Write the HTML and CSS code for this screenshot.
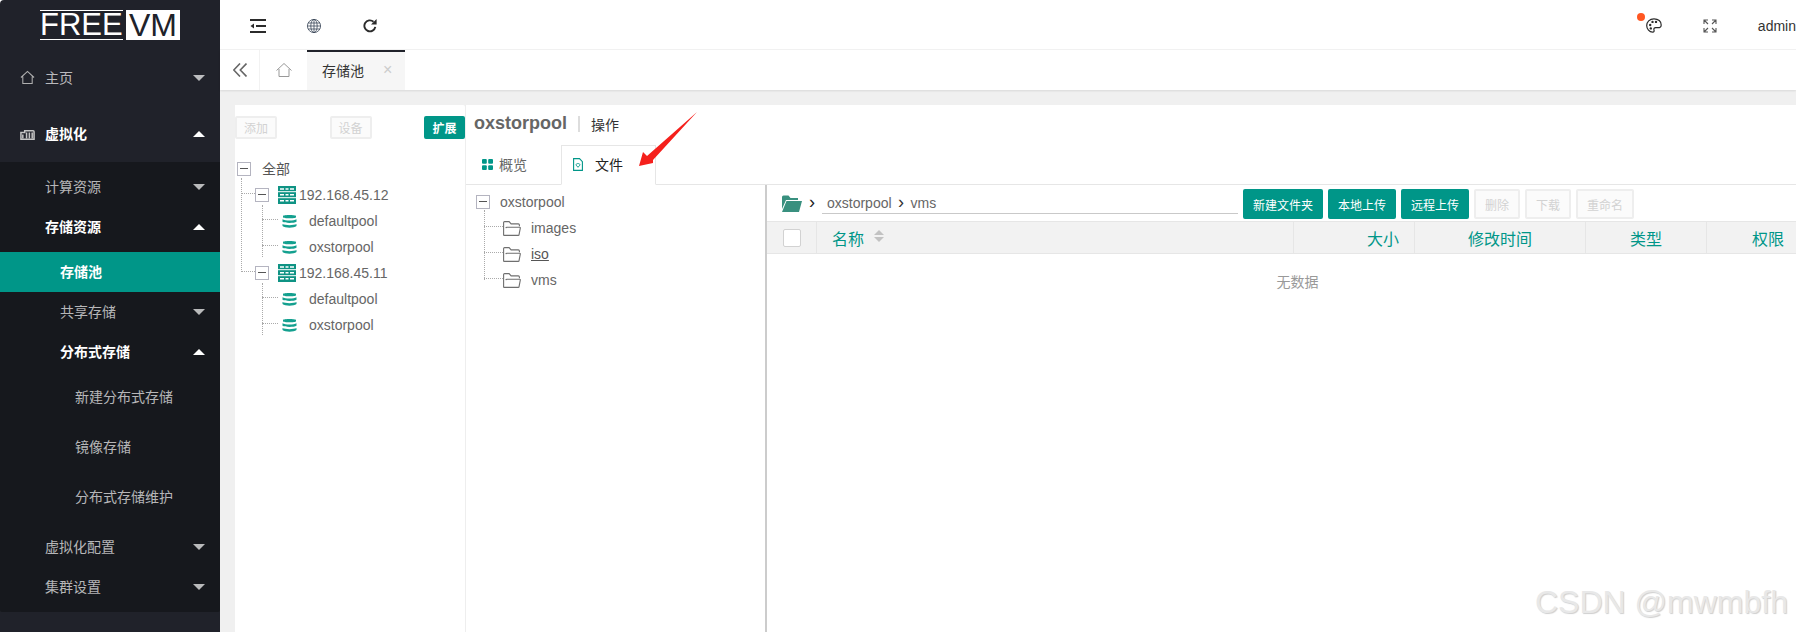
FILE: index.html
```html
<!doctype html>
<html lang="en">
  <head>
    <meta charset="utf-8">
    <title>存储池</title>
    <link rel="stylesheet" href="styles.css">
  </head>
  <body>
    <aside class="side">
      <div class="logo"><span class="logo-free">FREE</span><span class="logo-vm">VM</span></div>

      <a class="nav-top">
        <svg class="nav-icon" viewBox="0 0 16 16"><path d="M1 8 8 1.500 15 8M3 7v7.500h10V7" fill="none" stroke="#b0b0b0" stroke-width="1.100"/></svg>
        主页<i class="caret"></i>
      </a>
      <a class="nav-top open">
        <svg class="nav-icon" viewBox="0 0 16 16"><path d="M1 7h4V5h9a1 1 0 0 1 1 1v8H1zM7 7v6M10 7v6M13 7v6M3 9v4" fill="none" stroke="#c4c4c4" stroke-width="1.600"/></svg>
        虚拟化<i class="caret up"></i>
      </a>

      <div class="nav-sub">
        <a class="lv2">计算资源<i class="caret"></i></a>
        <a class="lv2 open">存储资源<i class="caret up"></i></a>
        <div class="nav-group">
          <a class="lv3 current">存储池</a>
          <a class="lv3">共享存储<i class="caret"></i></a>
          <a class="lv3 open">分布式存储<i class="caret up"></i></a>
          <a class="lv4">新建分布式存储</a>
          <a class="lv4">镜像存储</a>
          <a class="lv4">分布式存储维护</a>
        </div>
        <a class="lv2">虚拟化配置<i class="caret"></i></a>
        <a class="lv2">集群设置<i class="caret"></i></a>
      </div>
    </aside>

    <main class="main">
      <header class="topbar">
        <svg class="tool tool-first" viewBox="0 0 16 14"><path d="M0 1h16M6 7h10M0 13h16" stroke="#2b2b2b" stroke-width="1.800" fill="none"/><path d="M4 4.500 0.500 7 4 9.500z" fill="#2b2b2b"/></svg>
        <svg class="tool" viewBox="0 0 16 14"><g fill="none" stroke="#3a4658" stroke-width=".8"><circle cx="8" cy="7" r="6.600"/><ellipse cx="8" cy="7" rx="3.200" ry="6.600"/><path d="M8 .4v13.200M2 4h12M2 10h12M1.400 7h13.200"/></g></svg>
        <svg class="tool" viewBox="0 0 16 14"><path d="M13.300 7.800A5.500 5.500 0 1 1 11.500 2.700" fill="none" stroke="#2b2b2b" stroke-width="1.900"/><path d="M9 5.600H14.600V0z" fill="#2b2b2b"/></svg>
        <div class="top-right">
          <i class="dot"></i>
          <svg class="palette" viewBox="0 0 16 15"><path d="M8 .8C3.500.8.700 4 .700 7.500c0 3.500 2.800 6.700 5.800 6.700 2 0 1.700-1.700 1.400-2.600-.3-1.100.5-1.900 1.700-1.900h2.300c1.900 0 3.300-1 3.300-2.800C15.300 3.500 12.300.8 8 .8z" fill="none" stroke="#2b2b2b" stroke-width="1.200"/><circle cx="4.200" cy="7" r="1.200" fill="#2b2b2b"/><circle cx="6.500" cy="3.900" r="1.200" fill="#2b2b2b"/><circle cx="10" cy="3.900" r="1.200" fill="#2b2b2b"/><circle cx="4.800" cy="10.400" r="1.200" fill="#2b2b2b"/></svg>
          <svg class="expand" viewBox="0 0 14 14"><path d="M1 5V1h4M1 1l4 4M9 1h4v4M13 1 9 5M1 9v4h4M1 13l4-4M13 9v4H9M13 13 9 9" fill="none" stroke="#555" stroke-width="1.100"/></svg>
          <span class="admin">admin</span>
        </div>
      </header>

      <nav class="tabbar">
        <span class="tab-fold">
          <svg viewBox="0 0 14 14"><path d="M7 .5.800 7 7 13.500M13.500.5 7.300 7l6.200 6.500" fill="none" stroke="#666" stroke-width="1.600"/></svg>
        </span>
        <span class="tab-home">
          <svg viewBox="0 0 16 14"><path d="M.500 7.500 8 .500l7.500 7M3 6v7.500h10V6" fill="none" stroke="#999" stroke-width="1"/></svg>
        </span>
        <span class="tab-on">存储池<b class="tab-x">×</b></span>
      </nav>

      <div class="content">
        <section class="left-card">
          <div class="btn-row">
            <button class="btn off">添加</button>
            <button class="btn off">设备</button>
            <button class="btn teal">扩展</button>
          </div>
          <div class="tree">
            <div class="row root"><i class="box"></i><span class="root-label">全部</span></div>
            <ul class="nodes">
              <li>
                <div class="row host"><i class="box"></i>
                  <svg class="srv" viewBox="0 0 18 18"><use href="#srv"/></svg>192.168.45.12</div>
                <ul class="pools">
                  <li class="row pool"><svg class="db" viewBox="0 0 15 14"><use href="#db"/></svg>defaultpool</li>
                  <li class="row pool"><svg class="db" viewBox="0 0 15 14"><use href="#db"/></svg>oxstorpool</li>
                </ul>
              </li>
              <li>
                <div class="row host"><i class="box"></i>
                  <svg class="srv" viewBox="0 0 18 18"><use href="#srv"/></svg>192.168.45.11</div>
                <ul class="pools">
                  <li class="row pool"><svg class="db" viewBox="0 0 15 14"><use href="#db"/></svg>defaultpool</li>
                  <li class="row pool"><svg class="db" viewBox="0 0 15 14"><use href="#db"/></svg>oxstorpool</li>
                </ul>
              </li>
            </ul>
          </div>
        </section>

        <section class="right-card">
          <div class="title-row">
            <strong class="pool-name">oxstorpool</strong><i class="sep"></i><span class="ops">操作</span>
          </div>
          <div class="tabs">
            <span class="tab">
              <svg class="tab-ic" viewBox="0 0 11 11"><rect width="4.800" height="4.800" rx="1" fill="#009688"/><rect x="6.200" width="4.800" height="4.800" rx="1" fill="#009688"/><rect y="6.200" width="4.800" height="4.800" rx="1" fill="#009688"/><rect x="6.200" y="6.200" width="4.800" height="4.800" rx="1" fill="#009688"/></svg>概览
            </span>
            <span class="tab active">
              <svg class="tab-file" viewBox="0 0 10 13"><path d="M.600.600h5.900l2.900 3v8.800H.600z" fill="none" stroke="#009688" stroke-width="1.100"/><path d="M5 9.300 3.200 7.200a1.200 1.200 0 0 1 1.800-1.400 1.200 1.200 0 0 1 1.800 1.400z" fill="none" stroke="#009688" stroke-width=".9"/></svg>文件
            </span>
          </div>

          <div class="file-area">
            <div class="file-tree">
              <div class="row root"><i class="box"></i><span class="file-root">oxstorpool</span></div>
              <ul class="folders">
                <li class="row folder"><svg class="fold" viewBox="0 0 18 15"><use href="#fold"/></svg>images</li>
                <li class="row folder"><svg class="fold" viewBox="0 0 18 15"><use href="#fold"/></svg><u>iso</u></li>
                <li class="row folder"><svg class="fold" viewBox="0 0 18 15"><use href="#fold"/></svg>vms</li>
              </ul>
            </div>

            <div class="file-list">
              <div class="toolbar">
                <svg class="path-ic" viewBox="0 0 20 17"><path d="M0 2a1.500 1.500 0 0 1 1.500-1.500h5L8.500 3H16v2H4L0 14z" fill="#39907f"/><path d="M4.500 6H20l-3 11H0z" fill="#39907f"/></svg>
                <span class="chev">›</span>
                <div class="path-input">oxstorpool<span class="chev small">›</span>vms</div>
                <button class="btn teal big first-big">新建文件夹</button>
                <button class="btn teal big">本地上传</button>
                <button class="btn teal big">远程上传</button>
                <button class="btn off big">删除</button>
                <button class="btn off big">下载</button>
                <button class="btn off big">重命名</button>
              </div>
              <div class="thead">
                <span class="col col-check"><i class="check"></i></span>
                <span class="col col-name">名称<i class="sort"></i></span>
                <span class="col col-size">大小</span>
                <span class="col col-time">修改时间</span>
                <span class="col col-type">类型</span>
                <span class="col col-perm">权限</span>
              </div>
              <div class="empty">无数据</div>
            </div>
          </div>
        </section>
      </div>
    </main>

    <svg class="red-arrow" viewBox="0 0 1796 632"><path d="M697 112 653 160 653 163 639 166 643 152 647 156z" fill="#f5201c"/></svg>
    <div class="mark">CSDN @mwmbfh</div>

    <svg class="defs" width="0" height="0">
      <symbol id="srv" viewBox="0 0 18 18">
        <path d="M0 0h18v18H0z" fill="#0f9384"/>
        <path d="M0 5.700h18M0 11.700h18" stroke="#fff" stroke-width="1"/>
        <path d="M2 2.200h4v1.500H2zM7.500 2.200h3v1.500h-3zM12 2.200h4v1.500h-4zM2 8h4v1.500H2zM7.500 8h3v1.500h-3zM12 8h4v1.500h-4zM2 14h4v1.500H2zM7.500 14h3v1.500h-3zM12 14h4v1.500h-4z" fill="#fff"/>
      </symbol>
      <symbol id="db" viewBox="0 0 15 14">
        <path d="M1 2C1 .6 14 .6 14 2v1.200C14 4.600 1 4.600 1 3.200zM.500 5.300C3 6.900 12 6.900 14.500 5.300v2.400C12 9.300 3 9.300.500 7.700zM.500 10C3 11.500 12 11.500 14.500 10v2C12 14.200 3 14.200.500 12z" fill="#14a08f"/>
      </symbol>
      <symbol id="fold" viewBox="0 0 18 15">
        <path d="M.600 14.400V1.600q0-1 1-1h4.500l2 2.300h7.300q1 0 1 1v1.300M.600 14.400h14.500q1 0 1-1l1.200-6.200q.2-1-1-1H4q-1 0-1.200 1" fill="none" stroke="#6f6f6f" stroke-width="1.100"/>
      </symbol>
    </svg>
  </body>
</html>
```

FILE: styles.css
```css
* { box-sizing: border-box; }

html, body { height: 100%; }

body {
    margin: 0;
    display: flex;
    height: 632px;
    overflow: hidden;
    font-family: "Liberation Sans", "Noto Sans CJK SC", sans-serif;
    font-size: 14px;
    color: #666;
    background: #fff;
}

ul { list-style: none; margin: 0; padding: 0; }

/* sidebar */
.side {
    width: 220px;
    flex: none;
    background: #20222a;
    border-top-left-radius: 4px;
    color: rgba(255, 255, 255, .7);
}

.logo {
    height: 50px;
    padding: 10px 0 0 40px;
    display: flex;
    align-items: flex-start;
    font-size: 32px;
    line-height: 30px;
}

.logo-free {
    width: 83px;
    height: 30px;
    margin-right: 3px;
    color: #fff;
    border-top: 1px solid #fff;
    border-bottom: 1px solid #fff;
    font-size: 31px;
    line-height: 28px;
}

.logo-vm {
    width: 54px;
    height: 30px;
    background: #fff;
    color: #20222a;
    text-align: center;
}

.nav-top, .lv2, .lv3, .lv4 {
    display: flex;
    align-items: center;
    position: relative;
    padding-bottom: 2px;
}

.nav-top { height: 56px; padding-left: 20px; }
.nav-top.open, .lv2.open, .lv3.open { color: #fff; font-weight: bold; }
.nav-icon { width: 15px; height: 15px; margin-right: 10px; }

.nav-sub {
    background: #16181d;
    padding: 5px 0;
    border-radius: 0 0 2px 2px;
}

.lv2 { height: 40px; padding-left: 45px; }
.nav-group { padding: 5px 0; }
.lv3 { height: 40px; padding-left: 60px; }
.lv3.current { background: #009688; color: #fff; font-weight: bold; }
.lv4 { height: 50px; padding-left: 75px; }

.caret {
    position: absolute;
    right: 15px;
    top: 50%;
    margin-top: -3px;
    width: 0;
    height: 0;
    border-left: 6px solid transparent;
    border-right: 6px solid transparent;
    border-top: 6px solid rgba(255, 255, 255, .7);
}

.caret.up {
    border-top: 0;
    border-bottom: 6px solid #fff;
}

/* main column */
.main {
    flex: 1;
    min-width: 0;
    display: flex;
    flex-direction: column;
}

.topbar {
    height: 50px;
    flex: none;
    display: flex;
    align-items: center;
    padding-top: 2px;
    border-bottom: 1px solid #f2f2f2;
}

.tool { width: 16px; height: 14px; margin-right: 40px; }
.tool-first { margin-left: 30px; }

.top-right {
    margin-left: auto;
    display: flex;
    align-items: center;
    position: relative;
}

.dot {
    position: absolute;
    left: -9px;
    top: -5px;
    width: 8px;
    height: 8px;
    border-radius: 50%;
    background: #ff5722;
}

.palette { width: 16px; height: 15px; margin-right: 41px; }
.expand { width: 14px; height: 14px; margin-right: 41px; }
.admin { color: #333; font-size: 14px; }

.tabbar {
    height: 40px;
    flex: none;
    display: flex;
    align-items: stretch;
    box-shadow: 0 1px 2px rgba(0, 0, 0, .1);
    position: relative;
    background: #fff;
}

.tab-fold {
    width: 40px;
    display: flex;
    align-items: center;
    justify-content: center;
    border-right: 1px solid #f2f2f2;
}

.tab-fold svg { width: 14px; height: 14px; }

.tab-home {
    width: 47px;
    display: flex;
    align-items: center;
    justify-content: center;
}

.tab-home svg { width: 16px; height: 14px; }

.tab-on {
    width: 98px;
    background: #f6f6f6;
    border-top: 2px solid #20222a;
    padding: 0 0 2px 15px;
    display: flex;
    align-items: center;
    color: #333;
}

.tab-x {
    margin-left: 19px;
    font-weight: normal;
    font-size: 16px;
    color: #ccc;
}

.content {
    flex: 1;
    min-height: 0;
    display: flex;
    background: #f0f0f0;
    padding: 15px 0 0 15px;
}

.left-card {
    width: 230px;
    flex: none;
    background: #fff;
    padding-top: 11px;
    border-top-right-radius: 2px;
}

.btn-row {
    display: flex;
    justify-content: space-between;
    align-items: flex-start;
}

.btn {
    font-family: inherit;
    font-size: 12px;
    height: 23px;
    width: 42px;
    padding: 0;
    border-radius: 2px;
    border: 2px solid #eee;
    background: #fbfbfb;
    color: #d2d2d2;
}

.btn.teal {
    width: 41px;
    background: #009688;
    border-color: #009688;
    color: #fff;
    font-weight: bold;
}

/* trees */
.tree { padding: 17px 0 0 2px; }

.row {
    display: flex;
    align-items: center;
    height: 26px;
    position: relative;
    white-space: nowrap;
}

.box {
    width: 14px;
    height: 14px;
    flex: none;
    border: 1px solid #b4b4c0;
    position: relative;
    background: #fff;
}

.box::after {
    content: "";
    position: absolute;
    left: 2px;
    right: 2px;
    top: 5px;
    height: 1px;
    background: #555;
}

.root-label { margin: 0 0 2px 11px; color: #555; }

.nodes {
    position: relative;
    padding-left: 18px;
}

.nodes::before {
    content: "";
    position: absolute;
    left: 4px;
    top: -4px;
    bottom: 66px;
    border-left: 1px dotted #aaa;
}

.host::before, .pool::before, .folder::before {
    content: "";
    position: absolute;
    border-top: 1px dotted #aaa;
}

.host::before { left: -14px; width: 14px; top: 11px; }
.srv { width: 18px; height: 18px; margin: 0 3px 0 9px; flex: none; }

.pools {
    position: relative;
    padding-left: 27px;
}

.pools::before {
    content: "";
    position: absolute;
    left: 7px;
    top: -3px;
    bottom: 3px;
    border-left: 1px dotted #aaa;
}

.pool::before { left: -20px; width: 16px; top: 11px; }
.db { width: 15px; height: 14px; margin: 0 12px 0 0; flex: none; }

.right-card {
    flex: 1;
    min-width: 0;
    background: #fff;
    border-left: 1px solid #eee;
    display: flex;
    flex-direction: column;
}

.title-row {
    height: 37px;
    padding-left: 8px;
    display: flex;
    align-items: center;
    flex: none;
}

.pool-name { font-size: 18px; color: #666; }
.sep { width: 2px; height: 16px; margin: 0 11px; background: #ddd; }
.ops { color: #333; }

.tabs {
    height: 43px;
    flex: none;
    display: flex;
    align-items: flex-end;
    border-bottom: 1px solid #e6e6e6;
}

.tab {
    height: 40px;
    display: flex;
    align-items: center;
    padding: 0 0 2px 16px;
    width: 95px;
    margin-bottom: -1px;
    color: #666;
}

.tab-ic { width: 11px; height: 11px; margin-right: 6px; }

.tab.active {
    border: 1px solid #e6e6e6;
    border-bottom: 1px solid #fff;
    background: #fff;
    padding-left: 11px;
    color: #222;
}

.tab-file { width: 10px; height: 13px; margin-right: 12px; }

.file-area {
    flex: 1;
    min-height: 0;
    display: flex;
}

.file-tree {
    width: 301px;
    flex: none;
    padding: 4px 0 0 10px;
    border-right: 2px solid #ccc;
}

.file-root { margin-left: 10px; }

.folders {
    position: relative;
    padding-left: 27px;
}

.folders::before {
    content: "";
    position: absolute;
    left: 8px;
    top: -5px;
    bottom: 13px;
    border-left: 1px dotted #aaa;
}

.folder::before { left: -19px; width: 19px; top: 11px; }
.fold { width: 18px; height: 15px; margin-right: 10px; flex: none; }
.folder u { color: #555; }

.file-list {
    flex: 1;
    min-width: 0;
    overflow: hidden;
}

.toolbar {
    height: 36px;
    display: flex;
    align-items: flex-start;
    padding: 4px 0 0 15px;
}

.path-ic { width: 20px; height: 17px; margin-top: 6px; flex: none; }

.chev {
    width: 20px;
    text-align: center;
    font-size: 18px;
    line-height: 26px;
    color: #222;
    flex: none;
}

.path-input {
    width: 416px;
    height: 25px;
    flex: none;
    margin-right: 5px;
    padding-left: 5px;
    border-bottom: 1px solid #c9c9c9;
    line-height: 28px;
    display: flex;
    color: #666;
}

.chev.small { width: 19px; color: #333; line-height: 26px; }

.btn.big {
    width: 46px;
    height: 30px;
    margin-left: 5px;
    flex: none;
}

.btn.teal.big { width: 68px; font-weight: normal; }
.btn.teal.first-big { width: 80px; margin-left: 0; }
.btn.off.big:last-child { width: 58px; }

.thead {
    height: 33px;
    width: 1062px;
    display: flex;
    align-items: center;
    background: #f2f2f2;
    border-top: 1px solid #e6e6e6;
    border-bottom: 1px solid #e6e6e6;
    color: #009688;
    font-size: 16px;
}

.col {
    height: 100%;
    display: flex;
    align-items: center;
    flex: none;
    border-right: 1px solid #e6e6e6;
}

.col-check { width: 50px; padding-left: 16px; }
.col-name { width: 477px; padding-left: 15px; }
.col-size { width: 121px; justify-content: flex-end; padding-right: 15px; }
.col-time { width: 171px; justify-content: center; }
.col-type { width: 121px; justify-content: center; }
.col-perm { width: 122px; justify-content: center; border-right: 0; }

.check {
    width: 18px;
    height: 18px;
    background: #fff;
    border: 1px solid #d2d2d2;
    border-radius: 2px;
}

.sort {
    width: 0;
    height: 11px;
    margin-left: 10px;
    position: relative;
    border-left: 5px solid transparent;
    border-right: 5px solid transparent;
    border-top: 5px solid #c2c2c2;
    top: 5px;
}

.sort::before {
    content: "";
    position: absolute;
    left: -5px;
    top: -12px;
    border-left: 5px solid transparent;
    border-right: 5px solid transparent;
    border-bottom: 5px solid #c2c2c2;
}

.empty {
    width: 1061px;
    padding-top: 20px;
    text-align: center;
    color: #999;
    line-height: 16px;
}

/* things lying over the page */
.red-arrow {
    position: absolute;
    left: 0;
    top: 0;
    width: 1796px;
    height: 632px;
    pointer-events: none;
}

.mark {
    position: absolute;
    left: 1535px;
    top: 584px;
    font-size: 32px;
    line-height: 36px;
    color: #e8e8e8;
    text-shadow: 1px 1px 1px #cfcfcf;
    white-space: nowrap;
}

.defs { position: absolute; }
```
